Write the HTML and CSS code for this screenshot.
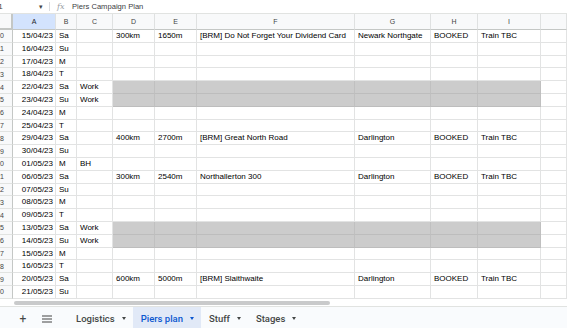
FILE: index.html
```html
<!DOCTYPE html>
<html lang="en">
<head>
  <meta charset="UTF-8">
  <meta name="viewport" content="width=device-width, initial-scale=1.0">
  <title>Piers Campaign Plan</title>
  <link rel="stylesheet" href="styles.css">
</head>
<body>
  <!-- formula bar -->
  <div class="formula-bar">
    <div class="name-box">
      <span class="name-ref">I1</span>
      <span class="name-arrow">&#9662;</span>
    </div>
    <div class="fx">fx</div>
    <div class="formula-text">Piers Campaign Plan</div>
  </div>

  <!-- grid -->
  <div class="sheet" id="sheet">
    <div class="corner"></div>
    <div class="col-head selected">A</div>
    <div class="col-head">B</div>
    <div class="col-head">C</div>
    <div class="col-head">D</div>
    <div class="col-head">E</div>
    <div class="col-head">F</div>
    <div class="col-head">G</div>
    <div class="col-head">H</div>
    <div class="col-head">I</div>
    <div class="col-head"></div>
  </div>

  <!-- horizontal scrollbar -->
  <div class="scroll-track">
    <div class="scroll-thumb"></div>
  </div>

  <!-- sheet tabs -->
  <div class="tab-bar">
    <div class="tab-tool">+</div>
    <div class="tab-tool">
      <svg width="10" height="8" viewBox="0 0 10 8"><path d="M0 1h10M0 4h10M0 7h10" stroke="#444" stroke-width="1.2"/></svg>
    </div>
    <div class="tab">Logistics <span class="tab-arrow"></span></div>
    <div class="tab active">Piers plan <span class="tab-arrow"></span></div>
    <div class="tab">Stuff <span class="tab-arrow"></span></div>
    <div class="tab">Stages <span class="tab-arrow"></span></div>
  </div>

  <script>
    // 行データ: [行番号, 日付, 曜日, メモ, 距離, 獲得標高, イベント, 場所, 状態, 移動], Work の行はグレー
    const rows = [
      [10, "15/04/23", "Sa", "", "300km", "1650m", "[BRM] Do Not Forget Your Dividend Card", "Newark Northgate", "BOOKED", "Train TBC"],
      [11, "16/04/23", "Su"],
      [12, "17/04/23", "M"],
      [13, "18/04/23", "T"],
      [14, "22/04/23", "Sa", "Work"],
      [15, "23/04/23", "Su", "Work"],
      [16, "24/04/23", "M"],
      [17, "25/04/23", "T"],
      [18, "29/04/23", "Sa", "", "400km", "2700m", "[BRM] Great North Road", "Darlington", "BOOKED", "Train TBC"],
      [19, "30/04/23", "Su"],
      [20, "01/05/23", "M", "BH"],
      [21, "06/05/23", "Sa", "", "300km", "2540m", "Northallerton 300", "Darlington", "BOOKED", "Train TBC"],
      [22, "07/05/23", "Su"],
      [23, "08/05/23", "M"],
      [24, "09/05/23", "T"],
      [25, "13/05/23", "Sa", "Work"],
      [26, "14/05/23", "Su", "Work"],
      [27, "15/05/23", "M"],
      [28, "16/05/23", "T"],
      [29, "20/05/23", "Sa", "", "600km", "5000m", "[BRM] Slaithwaite", "Darlington", "BOOKED", "Train TBC"],
      [30, "21/05/23", "Su"],
    ];

    const sheet = document.getElementById("sheet");

    rows.forEach(row => {
      const blocked = row[3] === "Work";

      const head = document.createElement("div");
      head.className = "row-head";
      head.innerHTML = "<span>" + row[0] + "</span>";
      sheet.appendChild(head);

      // A〜I 列 + 空の J 列
      for (let i = 1; i <= 10; i++) {
        const cell = document.createElement("div");
        cell.className = "cell";
        if (i === 1) cell.classList.add("date");
        if (blocked && i >= 4 && i <= 9) cell.classList.add("blocked");
        cell.textContent = i < 10 ? (row[i] || "") : "";
        sheet.appendChild(cell);
      }
    });
  </script>
</body>
</html>
```

FILE: styles.css
```css
body {
  margin: 0;
  padding: 0;
  width: 567px;
  height: 328px;
  overflow: hidden;
  background: #fff;
  color: #000;
  font-family: "Liberation Sans", Arial, sans-serif;
}

/* formula bar */
.formula-bar {
  height: 13px;
  display: flex;
  align-items: center;
  font-size: 8px;
  color: #444;
}

.name-box {
  width: 50px;
  height: 9px;
  display: flex;
  align-items: center;
  justify-content: space-between;
  padding-right: 6px;
  box-sizing: border-box;
  border-right: 1px solid #dadce0;
  overflow: hidden;
}

.name-ref {
  margin-left: -4px;
}

.name-arrow {
  font-size: 7px;
  color: #444;
}

.fx {
  margin-left: 7px;
  width: 15px;
  font-family: "DejaVu Serif", serif;
  font-style: italic;
  font-size: 8px;
  color: #9aa0a6;
}

.formula-text {
  font-size: 7.6px;
  color: #3c4043;
}

/* grid */
.sheet {
  display: grid;
  grid-template-columns: 13px 43px 21px 36px 42px 42px 158px 76px 47px 63px 26px;
  grid-template-rows: 16px;
  grid-auto-rows: 12.8px;
  border-top: 1px solid #e1e3e1;
  height: 285px;
  overflow: hidden;
}

.corner {
  background: #f8f9fa;
  border-right: 2px solid #c4c7c5;
  border-bottom: 2px solid #c4c7c5;
  box-sizing: border-box;
}

.col-head {
  background: #f8f9fa;
  border-right: 1px solid #dfe1e1;
  border-bottom: 1px solid #c4c7c5;
  box-sizing: border-box;
  display: flex;
  align-items: center;
  justify-content: center;
  font-size: 7px;
  color: #444;
}

.col-head.selected {
  background: #d3e3fd;
  color: #1f1f1f;
}

.row-head {
  background: #f8f9fa;
  border-right: 1px solid #c4c7c5;
  border-bottom: 1px solid #e1e3e1;
  box-sizing: border-box;
  display: flex;
  align-items: center;
  justify-content: flex-end;
  padding-right: 8px;
  overflow: hidden;
  font-size: 7px;
  color: #444;
}

.cell {
  border-right: 1px solid #e2e3e3;
  border-bottom: 1px solid #e2e3e3;
  box-sizing: border-box;
  padding: 0 3px;
  font-size: 8px;
  line-height: 12px;
  white-space: nowrap;
  overflow: hidden;
}

.cell.date {
  text-align: right;
  padding-right: 2px;
}

.cell.blocked {
  background: #cccccc;
  border-right-color: #c0c0c0;
  border-bottom-color: #bdbdbd;
}

/* scrollbar */
.scroll-track {
  height: 7px;
  padding-left: 14px;
  display: flex;
  align-items: center;
  border-bottom: 1px solid #e1e3e1;
}

.scroll-thumb {
  width: 316px;
  height: 4px;
  border-radius: 2px;
  background: #c9cacb;
}

/* sheet tabs */
.tab-bar {
  height: 23px;
  background: #f9fbfd;
  display: flex;
  align-items: stretch;
  padding-left: 11px;
  font-family: Roboto, "Liberation Sans", sans-serif;
  font-size: 9.5px;
  font-weight: 500;
  color: #444746;
}

.tab-tool {
  width: 24px;
  display: flex;
  align-items: center;
  justify-content: center;
  font-size: 12px;
  font-weight: 400;
}

.tab-tool + .tab-tool {
  margin-right: 9px;
}

.tab {
  display: flex;
  align-items: center;
  gap: 7px;
  padding: 0 7px 0 8px;
}

.tab.active {
  background: #e1e9f7;
  color: #0b57d0;
}

.tab-arrow {
  width: 0;
  height: 0;
  border-left: 2.5px solid transparent;
  border-right: 2.5px solid transparent;
  border-top: 3px solid currentColor;
}
```
